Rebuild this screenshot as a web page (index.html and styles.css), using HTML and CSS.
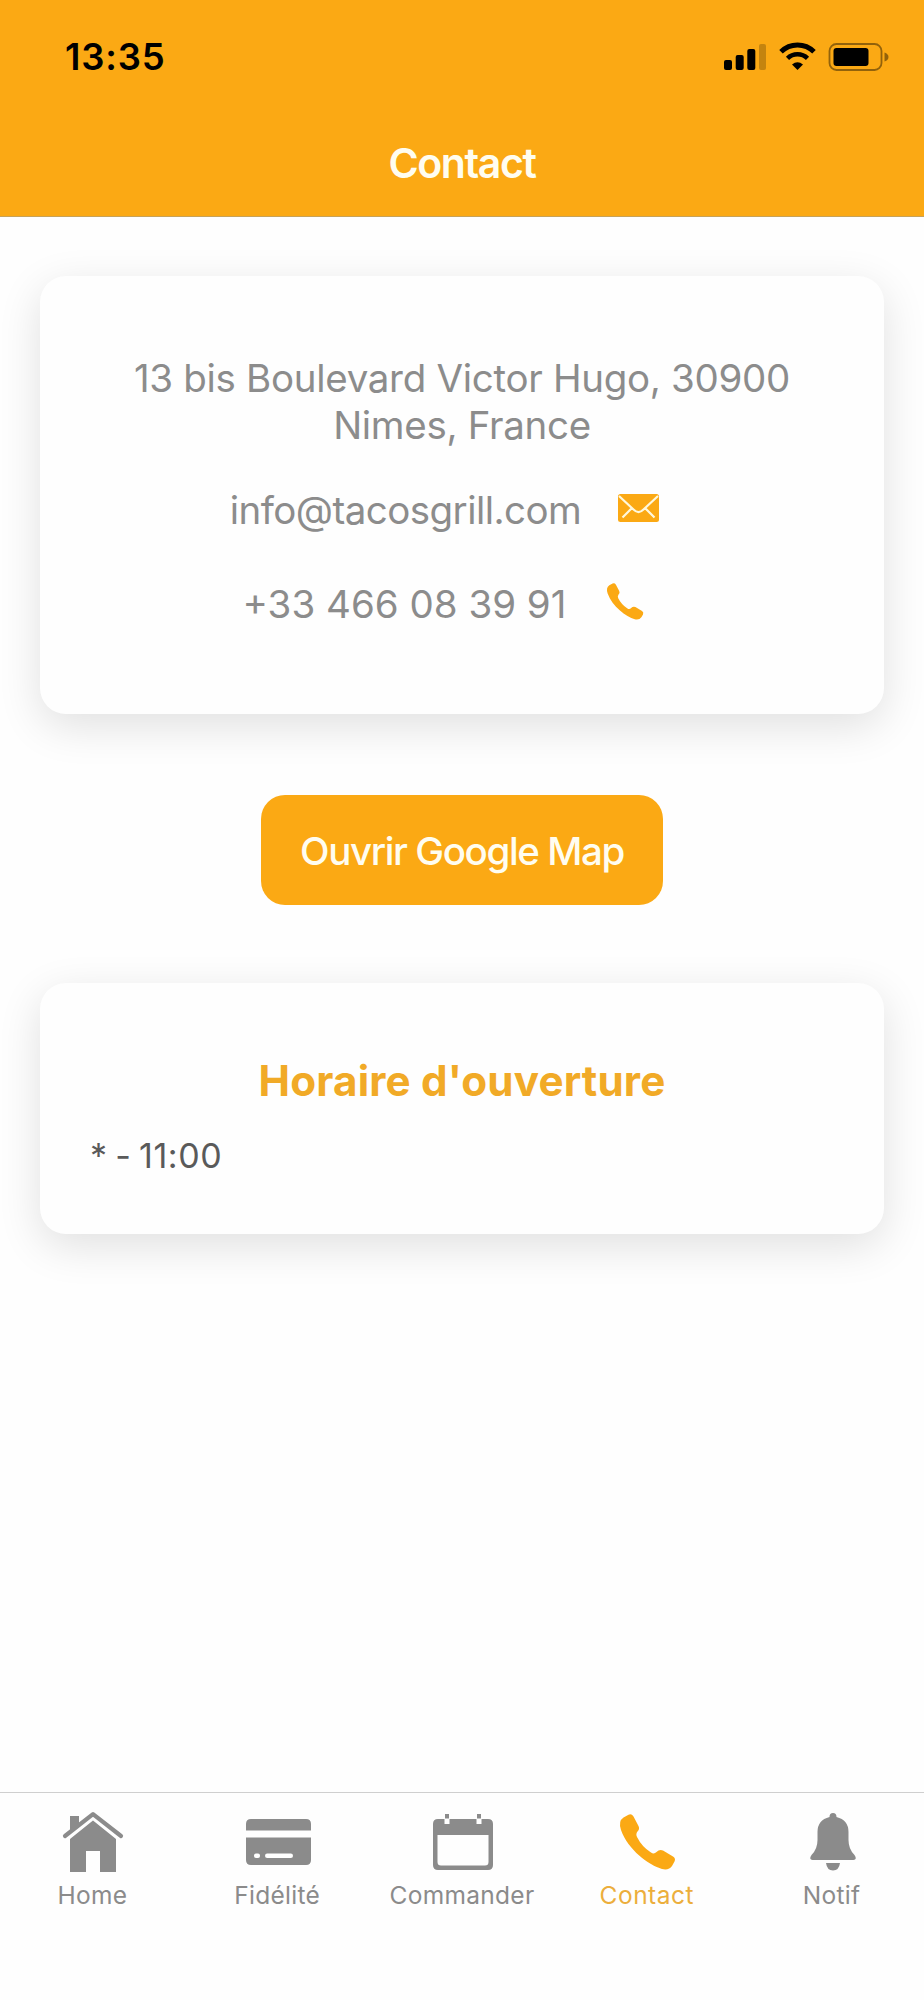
FILE: index.html
```html
<!DOCTYPE html>
<html lang="fr">
<head>
<meta charset="utf-8">
<title>Contact</title>
<link rel="stylesheet" href="styles.css">
</head>
<body>
<div class="app">
  <header class="header">
    <div class="status">
      <span class="time">13:35</span>
      <svg class="status-icons" viewBox="0 0 166 30" width="166" height="30">
        <rect x="0" y="18" width="8" height="10" rx="2"/>
        <rect x="11.7" y="13" width="8" height="15" rx="2"/>
        <rect x="23.3" y="7" width="8" height="21" rx="2"/>
        <rect x="35" y="2" width="7" height="26" rx="2" opacity=".22"/>
        <path d="M57 9.700A23.500 23.500 0 0 1 90 9.700" fill="none" stroke="#000" stroke-width="5"/>
        <path d="M63.500 16.300A14.500 14.500 0 0 1 83.500 16.300" fill="none" stroke="#000" stroke-width="4.600"/>
        <path d="M68 22.400Q73.500 18.200 79 22.400L73.500 28Z"/>
        <rect x="105.500" y="2" width="52" height="26" rx="7" fill="none" stroke="#000" stroke-width="1.800" opacity=".42"/>
        <rect x="109.500" y="6" width="35" height="18" rx="3"/>
        <path d="M160.500 10.500Q164.500 12 164.500 15T160.500 19.500Z" opacity=".42"/>
      </svg>
    </div>
    <h1 class="title">Contact</h1>
  </header>
  <main class="content">
    <section class="card card-contact">
      <p class="address">13 bis Boulevard Victor Hugo, 30900<br>Nimes, France</p>
      <a class="row row-mail"><span class="mail">info@tacosgrill.com</span>
        <svg viewBox="0 0 41 28" width="41" height="28">
          <rect width="41" height="28" rx="2.500" fill="#fba914"/>
          <path d="M1 2L15.500 15.500Q20.500 20.500 25.500 15.500L40 2M13.500 14.500L4.500 23.500M27.500 14.500L36.500 23.500" fill="none" stroke="#fff8dc" stroke-width="2.200"/>
        </svg>
      </a>
      <a class="row row-phone"><span class="phone">+33 466 08 39 91</span>
        <svg viewBox="0 0 56 56" width="37" height="37"><use href="#handset"/></svg>
      </a>
    </section>
    <button class="map-button">Ouvrir Google Map</button>
    <section class="card card-hours">
      <h2 class="hours-title">Horaire d'ouverture</h2>
      <p class="hours">* - 11:00</p>
    </section>
  </main>
  <nav class="tabs">
    <a class="tab"><svg viewBox="0 0 60 60" width="60" height="60">
      <path d="M7 25V4H16V11L7 19Z"/>
      <path d="M2 24L30 2.200L58 24" fill="none" stroke="currentColor" stroke-width="4.200" stroke-linecap="round" stroke-linejoin="round"/>
      <path d="M7 27L30 8.500L53 27V60H37V39H23V60H7Z"/>
    </svg><span class="label">Home</span></a>
    <a class="tab"><svg viewBox="0 0 65 60" width="65" height="60">
      <path d="M0 18.500V12Q0 7 5 7H60Q65 7 65 12V18.500ZM0 25.500H65V48Q65 53 60 53H5Q0 53 0 48Z"/>
      <rect x="8" y="41.500" width="6" height="4.500" rx="2" fill="#fff"/><rect x="19" y="41.500" width="28" height="4.500" rx="2.200" fill="#fff"/>
    </svg><span class="label">Fidélité</span></a>
    <a class="tab"><svg viewBox="0 0 60 60" width="60" height="60">
      <path fill-rule="evenodd" d="M5 7H55Q60 7 60 12V53Q60 58 55 58H5Q0 58 0 53V12Q0 7 5 7ZM4.500 23V50Q4.500 53.500 8 53.500H52Q55.500 53.500 55.500 50V23Z"/>
      <path d="M11.500 6H16.500V12H11.500ZM43.500 6H48.500V12H43.500Z" fill="#fff"/>
      <path d="M12 2H16V6.500H12ZM44 2H48V6.500H44Z"/>
    </svg><span class="label">Commander</span></a>
    <a class="tab tab-active"><svg viewBox="0 -2 56 60" width="56" height="60">
      <path id="handset" d="M3.500 3.500L8.500 .7Q11.500 -.8 13.500 2.500L18.500 12Q20 15 17.500 17.500Q15.500 20 17 23Q22 33 31 38.500Q34 40.500 36.500 38Q39.500 35 43 36.500L53 42.500Q56 44.500 54.500 47.500L52 52Q49 56.500 42 55C29 51 8 36 1 16Q-2 7 3.500 3.500Z"/>
    </svg><span class="label">Contact</span></a>
    <a class="tab"><svg viewBox="0 0 46 60" width="46" height="60">
      <path d="M23 1Q26.500 1 26.500 5Q38.500 8 38.500 20V28Q38.500 37 44.500 43Q47.500 47.500 43.500 48H2.500Q-1.500 47.500 1.500 43Q7.500 37 7.500 28V20Q7.500 8 19.500 5Q19.500 1 23 1Z"/>
      <path d="M16 51H30Q29 58.500 23 58.500T16 51Z"/>
    </svg><span class="label">Notif</span></a>
  </nav>
</div>
</body>
</html>
```

FILE: styles.css
```css
* { box-sizing: border-box; }
body { margin: 0; background: #fefefe; font-family: Inter, "Liberation Sans", sans-serif; }
h1, h2, p { margin: 0; }
svg { display: block; fill: currentColor; flex: none; overflow: visible; }
.app { display: flex; flex-direction: column; height: 2000px; }
.header { height: 217px; background: #fba914; border-bottom: 1px solid #c6a25a; }
.status { display: flex; justify-content: space-between; align-items: center; height: 114px; padding: 0 34px 0 65px; color: #000; }
.time { font-size: 36.500px; font-weight: 600; letter-spacing: .8px; }
.title { text-align: center; color: #fffdf0; font-size: 41px; font-weight: 600; line-height: 50px; letter-spacing: -1.400px; margin-top: 24px; }
.content { flex: 1; display: flex; flex-direction: column; align-items: center; padding: 59px 40px 0; }
.card { width: 844px; border-radius: 26px; background: #fefefe; box-shadow: 0 12px 44px rgba(0,0,0,.12); }
.card-contact { height: 438px; padding-top: 79px; color: #8c8c8c; font-size: 38.500px; line-height: 47px; text-align: center; }
.address { letter-spacing: -.3px; }
.row { display: flex; align-items: center; justify-content: center; }
.row svg { color: #fba914; margin-bottom: 6px; }
.row-mail { margin-top: 38px; gap: 37px; padding-right: 35px; }
.row-phone { margin-top: 47px; gap: 41px; padding-right: 37px; }
.mail { letter-spacing: -.55px; }
.map-button { width: 402px; height: 110px; margin: 81px 0 78px; border: 0; border-radius: 24px; background: #fba914; color: #fffdf0; font: 500 38.500px/46px Inter, sans-serif; letter-spacing: -1.400px; padding: 1px 0 0; }
.card-hours { height: 251px; padding: 73px 50px 0; }
.hours-title { text-align: center; color: #f1aa27; font-size: 42.200px; line-height: 50px; font-weight: 700; letter-spacing: .15px; }
.hours { color: #5a5a5a; font-size: 34px; line-height: 42px; letter-spacing: .6px; word-spacing: -2.600px; margin-top: 29px; }
.tabs { display: grid; grid-template-columns: repeat(5, 1fr); height: 208px; border-top: 1px solid #cfcfcf; padding-top: 19px; }
.tab { display: flex; flex-direction: column; align-items: center; gap: 8px; color: #8b8b8b; font-size: 24.500px; line-height: 30px; }
.tab svg { margin-left: 2px; }
.label { letter-spacing: .3px; }
.tab-active { color: #fba914; }
.tab-active .label { color: #ecae3c; letter-spacing: .5px; }
```
